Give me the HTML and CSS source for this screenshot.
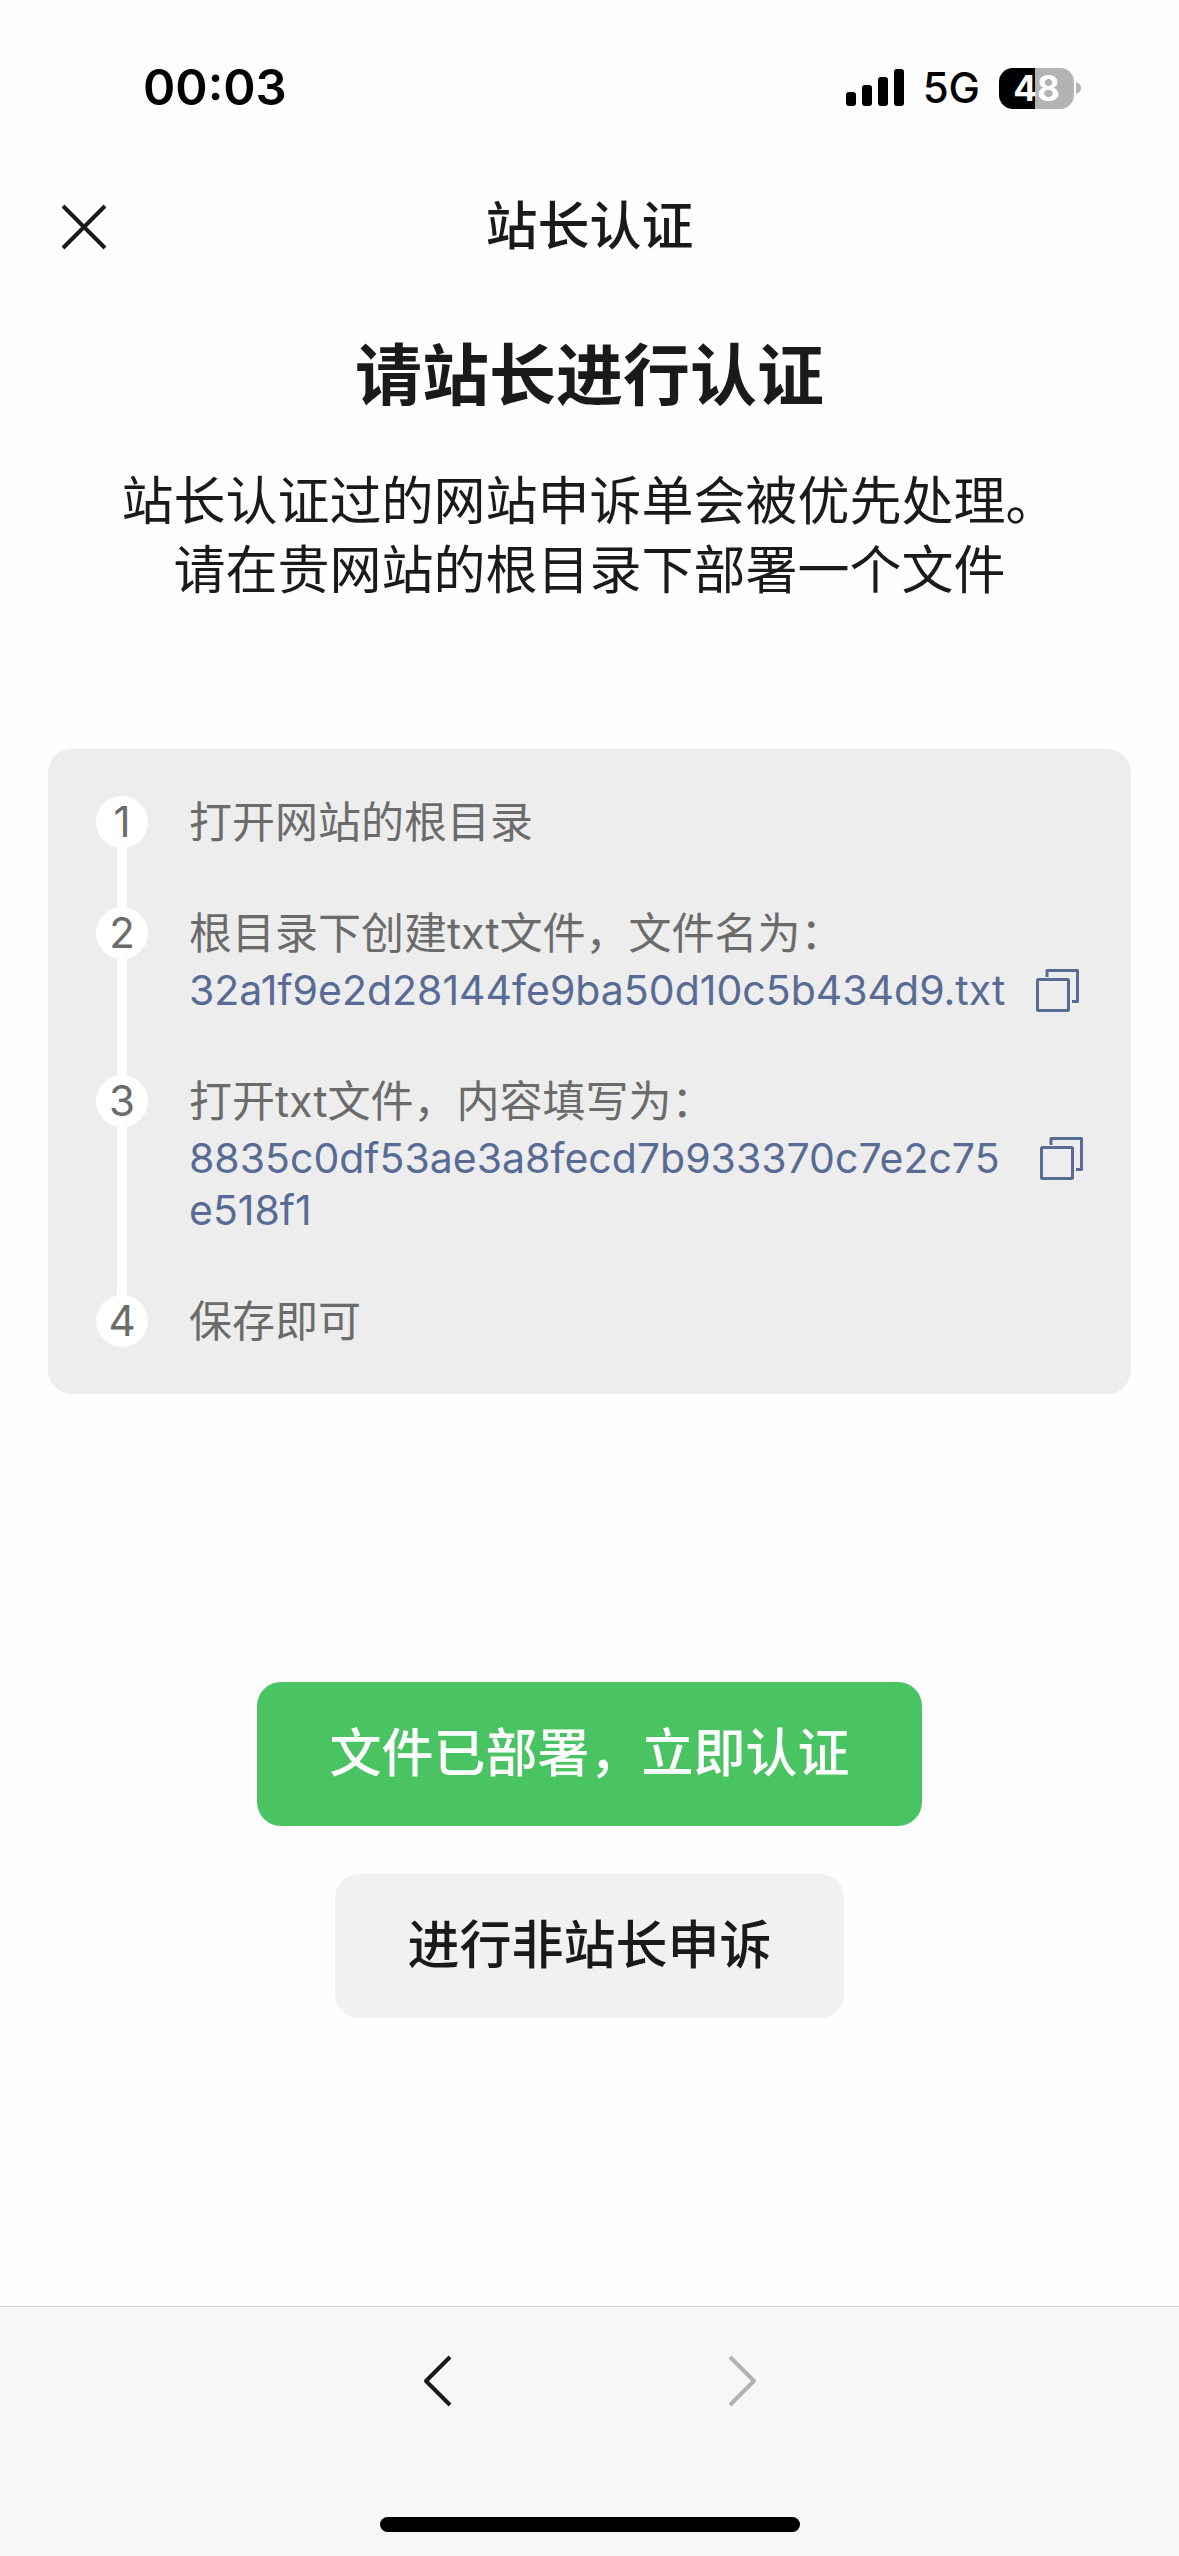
FILE: index.html
```html
<!DOCTYPE html>
<html lang="zh-CN">
<head>
  <meta charset="utf-8">
  <meta name="viewport" content="width=device-width, initial-scale=1">
  <title>站长认证</title>
  <link rel="stylesheet" href="styles.css">
</head>
<body>
  <div class="status">
    <span class="status-time">00:03</span>
    <div class="status-right">
      <svg class="signal" width="58" height="38" viewBox="0 0 58 38" aria-hidden="true">
        <rect x="0" y="23" width="10" height="14" rx="3"/>
        <rect x="16" y="16" width="10" height="21" rx="3"/>
        <rect x="32" y="8" width="10" height="29" rx="3"/>
        <rect x="48" y="0" width="10" height="37" rx="3"/>
      </svg>
      <span class="network">5G</span>
      <div class="battery">
        <span class="battery-level">48</span>
        <svg width="5" height="12" viewBox="0 0 5 12" aria-hidden="true"><path d="M0 0C3 1 5 3 5 6S3 11 0 12Z" fill="#b3b3b3"/></svg>
      </div>
    </div>
  </div>

  <header class="nav">
    <button class="icon-button" type="button" aria-label="关闭">
      <svg width="48" height="48" viewBox="0 0 48 48" fill="none" stroke="#1a1a1a" stroke-width="4" aria-hidden="true"><path d="M3 3L45 45M45 3L3 45"/></svg>
    </button>
    <span class="nav-title">站长认证</span>
  </header>

  <main class="main">
    <h1 class="title">请站长进行认证</h1>
    <p class="intro">站长认证过的网站申诉单会被优先处理。<br>请在贵网站的根目录下部署一个文件</p>

    <ol class="steps">
      <li class="step">
        <div class="marker"><span class="number">1</span></div>
        <div class="step-body"><p class="label">打开网站的根目录</p></div>
      </li>
      <li class="step">
        <div class="marker"><span class="number">2</span></div>
        <div class="step-body">
          <p class="label">根目录下创建txt文件，文件名为：</p>
          <div class="value">
            <span class="value-text">32a1f9e2d28144fe9ba50d10c5b434d9.txt</span>
            <button class="icon-button copy" type="button" aria-label="复制文件名">
              <svg width="43" height="43" viewBox="0 0 43 43" fill="none" stroke="#576b95" stroke-width="3" stroke-linejoin="round" aria-hidden="true"><rect x="1.5" y="10.5" width="31" height="31" rx="1"/><path d="M11 8V1.5H41.5V32.5H36"/></svg>
            </button>
          </div>
        </div>
      </li>
      <li class="step">
        <div class="marker"><span class="number">3</span></div>
        <div class="step-body">
          <p class="label">打开txt文件，内容填写为：</p>
          <div class="value">
            <span class="value-text">8835c0df53ae3a8fecd7b933370c7e2c75e518f1</span>
            <button class="icon-button copy" type="button" aria-label="复制内容">
              <svg width="43" height="43" viewBox="0 0 43 43" fill="none" stroke="#576b95" stroke-width="3" stroke-linejoin="round" aria-hidden="true"><rect x="1.5" y="10.5" width="31" height="31" rx="1"/><path d="M11 8V1.5H41.5V32.5H36"/></svg>
            </button>
          </div>
        </div>
      </li>
      <li class="step">
        <div class="marker"><span class="number">4</span></div>
        <div class="step-body"><p class="label">保存即可</p></div>
      </li>
    </ol>

    <div class="actions">
      <button class="button button-primary" type="button">文件已部署，立即认证</button>
      <button class="button button-default" type="button">进行非站长申诉</button>
    </div>
  </main>

  <footer class="toolbar">
    <nav class="history">
      <button class="icon-button" type="button" aria-label="后退">
        <svg width="30" height="52" viewBox="0 0 30 52" fill="none" stroke="#1a1a1a" stroke-width="4" stroke-linejoin="round" aria-hidden="true"><path d="M27 2L3 26L27 50"/></svg>
      </button>
      <button class="icon-button" type="button" aria-label="前进" disabled>
        <svg width="30" height="52" viewBox="0 0 30 52" fill="none" stroke="#b2b2b2" stroke-width="4" stroke-linejoin="round" aria-hidden="true"><path d="M3 2L27 26L3 50"/></svg>
      </button>
    </nav>
    <div class="home-indicator"></div>
  </footer>
</body>
</html>
```

FILE: styles.css
```css
* {
  box-sizing: border-box;
}

body {
  margin: 0;
  min-height: 100vh;
  display: flex;
  flex-direction: column;
  background: #fefefe;
  color: #1a1a1a;
  font-family: Inter, "Noto Sans CJK SC", sans-serif;
}

h1,
p,
ol {
  margin: 0;
  padding: 0;
}

button {
  font: inherit;
  border: 0;
}

svg {
  display: block;
}

.icon-button {
  padding: 0;
  background: none;
  color: inherit;
}

/* Status bar */
.status {
  display: flex;
  align-items: center;
  justify-content: space-between;
  padding: 54px 98px 54px 143px;
  line-height: 68px;
  color: #000;
}

.status-time {
  font-size: 49px;
  font-weight: 600;
}

.status-right {
  display: flex;
  align-items: center;
  gap: 19px;
}

.network {
  font-size: 42px;
  font-weight: 500;
}

.battery {
  display: flex;
  align-items: center;
  gap: 2px;
}

.battery-level {
  width: 75px;
  border-radius: 14px;
  background: linear-gradient(to right, #000 48%, #b3b3b3 48%);
  color: #fff;
  font-size: 35px;
  font-weight: 700;
  line-height: 41px;
  text-align: center;
}

/* Navigation bar */
.nav {
  display: grid;
  grid-template-columns: 1fr auto 1fr;
  align-items: center;
  padding: 13px 60px;
}

.nav-title {
  font-size: 52px;
  font-weight: 500;
  line-height: 76px;
}

/* Content */
.main {
  padding: 54px 48px;
}

.title {
  font-size: 67px;
  font-weight: 700;
  line-height: 88px;
  text-align: center;
}

.intro {
  margin-top: 47px;
  font-size: 52px;
  line-height: 69px;
  text-align: center;
}

.steps {
  margin-top: 144px;
  padding: 47px 48px;
  border-radius: 24px;
  background: #ededed;
  color: #6b6b6b;
  font-size: 42px;
  line-height: 52px;
  list-style: none;
}

.step {
  display: grid;
  grid-template-columns: 52px 1fr;
  column-gap: 41px;
}

.marker {
  display: flex;
  flex-direction: column;
  align-items: center;
}

.number {
  width: 52px;
  border-radius: 50%;
  background: #fff;
  text-align: center;
}

.step:not(:last-child) .marker::after {
  content: "";
  flex: 1;
  width: 10px;
  background: #fff;
}

.step:not(:last-child) .step-body {
  padding-bottom: 59px;
}

.label {
  font-size: 43px;
}

.value {
  display: flex;
  align-items: flex-start;
  gap: 31px;
  margin-top: 5px;
  color: #576b95;
  font-size: 41px;
}

.value-text {
  word-break: break-all;
}

.copy {
  margin-top: 5px;
}

.actions {
  display: flex;
  flex-direction: column;
  align-items: center;
  gap: 48px;
  margin-top: 288px;
}

.button {
  padding: 36px 72px;
  border-radius: 24px;
  font-size: 52px;
  font-weight: 500;
  line-height: 72px;
}

.button-primary {
  background: #4ac463;
  color: #fff;
}

.button-default {
  background: #f1f1f1;
  color: #1a1a1a;
}

/* Bottom toolbar */
.toolbar {
  display: flex;
  flex-direction: column;
  align-items: center;
  gap: 110px;
  margin-top: auto;
  padding: 48px 0 24px;
  border-top: 1px solid #d6d6d6;
  background: #f7f7f7;
}

.history {
  display: flex;
  gap: 274px;
}

.home-indicator {
  width: 420px;
  height: 15px;
  border-radius: 8px;
  background: #000;
}
```
